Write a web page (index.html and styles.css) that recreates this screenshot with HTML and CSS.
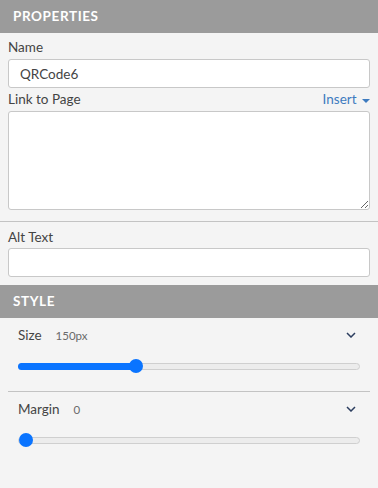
FILE: index.html
```html
<!DOCTYPE html>
<html lang="en">
<head>
    <meta charset="UTF-8">
    <title>Properties</title>
    <link rel="stylesheet" href="styles.css">
</head>
<body>
    <div class="panel-head">Properties</div>
    <section class="group">
        <label class="field-label">Name</label>
        <input class="text-input" type="text" value="QRCode6">

        <div class="label-row">
            <label class="field-label">Link to Page</label>
            <span class="insert">Insert <span class="caret"></span></span>
        </div>
        <textarea class="text-area"></textarea>
    </section>

    <section class="group alt">
        <label class="field-label">Alt Text</label>
        <input class="text-input" type="text">
    </section>

    <div class="panel-head">Style</div>
    <section class="style-list">
        <div class="style-row">
            <div class="row-head">
                <span class="row-name">Size</span>
                <span class="row-value">150px</span>
                <svg class="chevron" width="10" height="6" viewBox="0 0 10 6"><path d="M1 1 L5 5 L9 1" fill="none" stroke="#2c3e5f" stroke-width="1.5"/></svg>
            </div>
            <div class="slider">
                <div class="fill" style="width: 117px"></div>
                <div class="thumb" style="left: 110px"></div>
            </div>
        </div>
        <div class="style-row">
            <div class="row-head">
                <span class="row-name">Margin</span>
                <span class="row-value">0</span>
                <svg class="chevron" width="10" height="6" viewBox="0 0 10 6"><path d="M1 1 L5 5 L9 1" fill="none" stroke="#2c3e5f" stroke-width="1.5"/></svg>
            </div>
            <div class="slider">
                <div class="thumb" style="left: 0px"></div>
            </div>
        </div>
    </section>
</body>
</html>
```

FILE: styles.css
```css
body {
    font-family: Lato, "Open Sans", sans-serif;
    margin: 0;
    padding: 0;
    background-color: #f4f4f4;
    color: #444;
    font-size: 13.5px;
}

.panel-head {
    background-color: #9b9b9b;
    color: white;
    text-transform: uppercase;
    font-weight: bold;
    letter-spacing: 0.6px;
    font-size: 13.5px;
    height: 33px;
    line-height: 32px;
    padding: 0 13px;
}

.group {
    padding: 6px 8px 11px;
}

.group.alt {
    border-top: 1px solid #c3c3c3;
    padding-top: 7px;
    padding-bottom: 8px;
}

.field-label {
    display: block;
    font-size: 13.5px;
    line-height: 17px;
    color: #444;
    margin-bottom: 3px;
}

.group.alt .field-label {
    margin-bottom: 2px;
}

.label-row {
    display: flex;
    justify-content: space-between;
    align-items: baseline;
    margin-top: 3px;
}

.insert {
    color: #3d7bbf;
    font-size: 13.5px;
}

.caret {
    display: inline-block;
    width: 0;
    height: 0;
    border-left: 4px solid transparent;
    border-right: 4px solid transparent;
    border-top: 4px solid #3d7bbf;
    vertical-align: middle;
    margin-left: 2px;
}

.text-input, .text-area {
    display: block;
    box-sizing: border-box;
    width: 100%;
    background: white;
    border: 1px solid #c8c8c8;
    border-radius: 3px;
    font-family: inherit;
    font-size: 13.5px;
    color: #444;
    margin: 0;
}

.text-input {
    height: 29px;
    padding: 0 11px;
}

.text-area {
    height: 99px;
    resize: vertical;
}

.style-list {
    padding: 0 8px;
}

.style-row {
    padding: 7px 10px 21px;
}

.style-row + .style-row {
    border-top: 1px solid #c3c3c3;
}

.row-head {
    display: flex;
    align-items: center;
    height: 20px;
}

.row-name {
    color: #444;
    font-size: 13.5px;
}

.row-value {
    color: #6a6a6a;
    font-size: 11.5px;
    margin-left: 14px;
}

.chevron {
    margin-left: auto;
    margin-right: 4px;
}

.slider {
    position: relative;
    margin-top: 18px;
    height: 7px;
    border: 1px solid #cfcfcf;
    border-radius: 4px;
    background: #ececec;
    box-sizing: border-box;
}

.fill {
    position: absolute;
    left: -1px;
    top: -1px;
    height: 7px;
    background: #0a74ff;
    border-radius: 4px;
}

.thumb {
    position: absolute;
    top: -5px;
    width: 14px;
    height: 14px;
    border-radius: 50%;
    background: #0a74ff;
}
```
